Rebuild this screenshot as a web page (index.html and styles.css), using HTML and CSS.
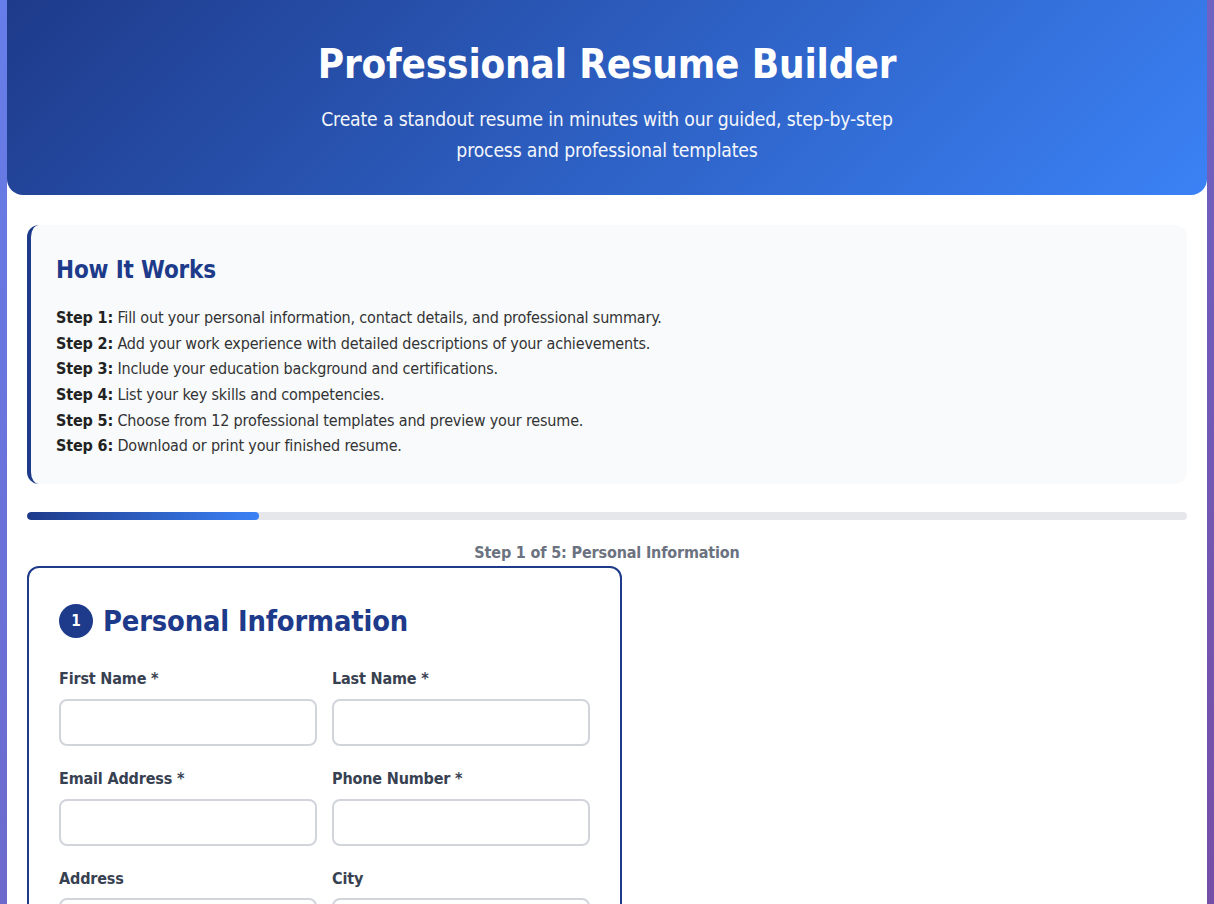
FILE: index.html
```html
<!DOCTYPE html>
<html lang="en">
  <head>
    <meta charset="UTF-8" />
    <title>Professional Resume Builder</title>
    <link rel="stylesheet" href="styles.css">
  </head>
  <body>
    <div class="container">
      <header class="header">
        <h1>Professional Resume Builder</h1>
        <p>Create a standout resume in minutes with our guided, step-by-step process and professional templates</p>
      </header>

      <main class="content">
        <section class="instructions">
          <h2>How It Works</h2>
          <div class="steps">
            <div><strong>Step 1:</strong> Fill out your personal information, contact details, and professional summary.</div>
            <div><strong>Step 2:</strong> Add your work experience with detailed descriptions of your achievements.</div>
            <div><strong>Step 3:</strong> Include your education background and certifications.</div>
            <div><strong>Step 4:</strong> List your key skills and competencies.</div>
            <div><strong>Step 5:</strong> Choose from 12 professional templates and preview your resume.</div>
            <div><strong>Step 6:</strong> Download or print your finished resume.</div>
          </div>
        </section>

        <div class="progress-bar">
          <div class="progress-fill" style="width: 20%"></div>
        </div>
        <div class="progress-text">Step 1 of 5: Personal Information</div>

        <div class="builder">
          <form class="form-section" id="personalForm">
            <h3 class="section-title"><span class="step-number">1</span>Personal Information</h3>

            <div class="form-row">
              <div class="form-group">
                <label for="firstName">First Name *</label>
                <input type="text" id="firstName" required />
              </div>
              <div class="form-group">
                <label for="lastName">Last Name *</label>
                <input type="text" id="lastName" required />
              </div>
            </div>

            <div class="form-row">
              <div class="form-group">
                <label for="email">Email Address *</label>
                <input type="email" id="email" required />
              </div>
              <div class="form-group">
                <label for="phone">Phone Number *</label>
                <input type="tel" id="phone" required />
              </div>
            </div>

            <div class="form-row">
              <div class="form-group">
                <label for="address">Address</label>
                <input type="text" id="address" />
              </div>
              <div class="form-group">
                <label for="city">City</label>
                <input type="text" id="city" />
              </div>
            </div>
          </form>
          <div class="preview"></div>
        </div>
      </main>
    </div>
  </body>
</html>
```

FILE: styles.css
```css
* {
  box-sizing: border-box;
}
body {
  margin: 0;
  font-family: "DejaVu Sans Condensed", "DejaVu Sans", sans-serif;
  font-stretch: condensed;
  letter-spacing: -0.01em;
  line-height: 1.6;
  color: #333;
  background: linear-gradient(135deg, #667eea 0%, #764ba2 100%);
  min-height: 100vh;
}
.container {
  max-width: 1200px;
  margin: 0 auto;
  background: #fff;
  min-height: 100vh;
}
.header {
  background: linear-gradient(135deg, #1e3a8a 0%, #3b82f6 100%);
  color: #fff;
  text-align: center;
  padding: 40px 20px 29px;
  border-radius: 0 0 16px 16px;
}
.header h1 {
  margin: 0 0 17px;
  font-size: 2.5rem;
  line-height: 1.2;
}
.header p {
  margin: 0 auto;
  max-width: 600px;
  font-size: 1.2rem;
  opacity: 0.95;
}
.content {
  padding: 30px 20px;
}
.instructions {
  background: #f8fafc;
  border-left: 4px solid #1e3a8a;
  border-radius: 12px;
  padding: 31px 25px 25px;
}
.instructions h2 {
  margin: 0 0 20px;
  color: #1e3a8a;
  font-size: 1.5rem;
  line-height: 1.2;
}
.steps strong {
  color: #222;
}
.progress-bar {
  height: 8px;
  background: #e5e7eb;
  border-radius: 4px;
  margin-top: 28px;
  overflow: hidden;
}
.progress-fill {
  height: 100%;
  background: linear-gradient(90deg, #1e3a8a, #3b82f6);
  border-radius: 4px;
}
.progress-text {
  text-align: center;
  color: #6b7280;
  font-weight: bold;
  font-size: 1rem;
  margin-top: 20px;
  margin-bottom: 1px;
}
.builder {
  display: grid;
  grid-template-columns: 595px 1fr;
  gap: 30px;
}
.form-section {
  border: 2px solid #1e3a8a;
  border-radius: 12px;
  padding: 30px;
  background: #fff;
}
.section-title {
  display: flex;
  align-items: center;
  gap: 10px;
  margin: 0 0 22px;
  color: #1e3a8a;
  font-size: 1.8rem;
  line-height: 1.6;
}
.step-number {
  width: 34px;
  height: 34px;
  border-radius: 50%;
  background: #1e3a8a;
  color: #fff;
  font-size: 0.95rem;
  display: flex;
  align-items: center;
  justify-content: center;
}
.form-row {
  display: grid;
  grid-template-columns: 1fr 1fr;
  gap: 15px;
}
.form-group {
  margin-bottom: 20px;
}
.form-group label {
  display: block;
  font-weight: bold;
  color: #374151;
  margin-bottom: 7px;
}
.form-group input {
  width: 100%;
  padding: 12px;
  border: 2px solid #d1d5db;
  border-radius: 8px;
  font-family: inherit;
  font-size: 1rem;
}
```
